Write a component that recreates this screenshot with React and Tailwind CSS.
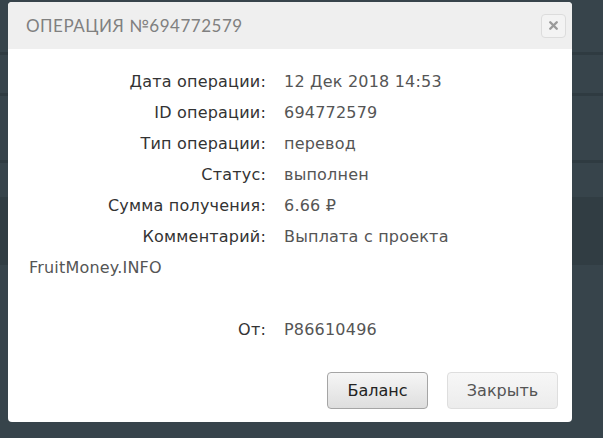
import { X } from "lucide-react";

const rows = [
  ["Дата операции:", "12 Дек 2018 14:53"],
  ["ID операции:", "694772579"],
  ["Тип операции:", "перевод"],
  ["Статус:", "выполнен"],
  ["Сумма получения:", "6.66 ₽"],
  ["Комментарий:", "Выплата с проекта"],
];

function Row({ label, value }) {
  return (
    <div className="flex h-[31px] items-center">
      <div className="w-[258px] text-right text-[#333]">{label}</div>
      <div className="pl-[18px] text-[#555]">{value}</div>
    </div>
  );
}

export default function App() {
  return (
    <div className="relative h-[438px] w-[603px] overflow-hidden bg-[#37444b]">
      {/* page behind the modal */}
      <div className="flex flex-col pt-[52px]">
        <div className="h-[3px] bg-[#2f3b41]" />
        <div className="h-[38px]" />
        <div className="h-[3px] bg-[#2f3b41]" />
        <div className="h-[64px]" />
        <div className="h-[3px] bg-[#2f3b41]" />
        <div className="mt-[34px] h-[68px] bg-[#313d43]" />
      </div>

      {/* modal */}
      <div className="absolute left-[8px] top-[2px] flex h-[420px] w-[564px] flex-col overflow-hidden rounded-[4px] bg-white font-['DejaVu_Sans',sans-serif]">
        <div className="flex h-[47px] items-center justify-between bg-[#efefef] pl-[18px] pr-[6px]">
          <div className="font-['Lato',sans-serif] text-[17px] tracking-[0.5px] text-[#808080]">
            ОПЕРАЦИЯ №694772579
          </div>
          <button className="flex h-[24px] w-[25px] items-center justify-center rounded-[4px] border border-[#dcdcdc] bg-[#f3f3f3]">
            <X size={13} strokeWidth={4.5} className="text-[#9a9a9a]" />
          </button>
        </div>

        <div className="flex-1 pt-[17px] text-[16px] tracking-[0.2px] font-['DejaVu_Sans',sans-serif]">
          {rows.map(([l, v]) => (
            <Row key={l} label={l} value={v} />
          ))}
          <div className="flex h-[31px] items-center pl-[21px] text-[#555]">
            FruitMoney.INFO
          </div>
          <div className="h-[31px]" />
          <Row label="От:" value="P86610496" />
        </div>

        <div className="flex justify-end gap-[19px] pb-[13px] pr-[14px] font-['DejaVu_Sans',sans-serif] text-[16px]">
          <button className="h-[37px] w-[101px] rounded-[4px] border border-[#a5a5a5] bg-gradient-to-b from-[#f6f6f6] to-[#dedede] text-[#222]">
            Баланс
          </button>
          <button className="h-[37px] w-[111px] rounded-[4px] border border-[#dedede] bg-gradient-to-b from-[#f7f7f7] to-[#ececec] text-[#555]">
            Закрыть
          </button>
        </div>
      </div>
    </div>
  );
}
